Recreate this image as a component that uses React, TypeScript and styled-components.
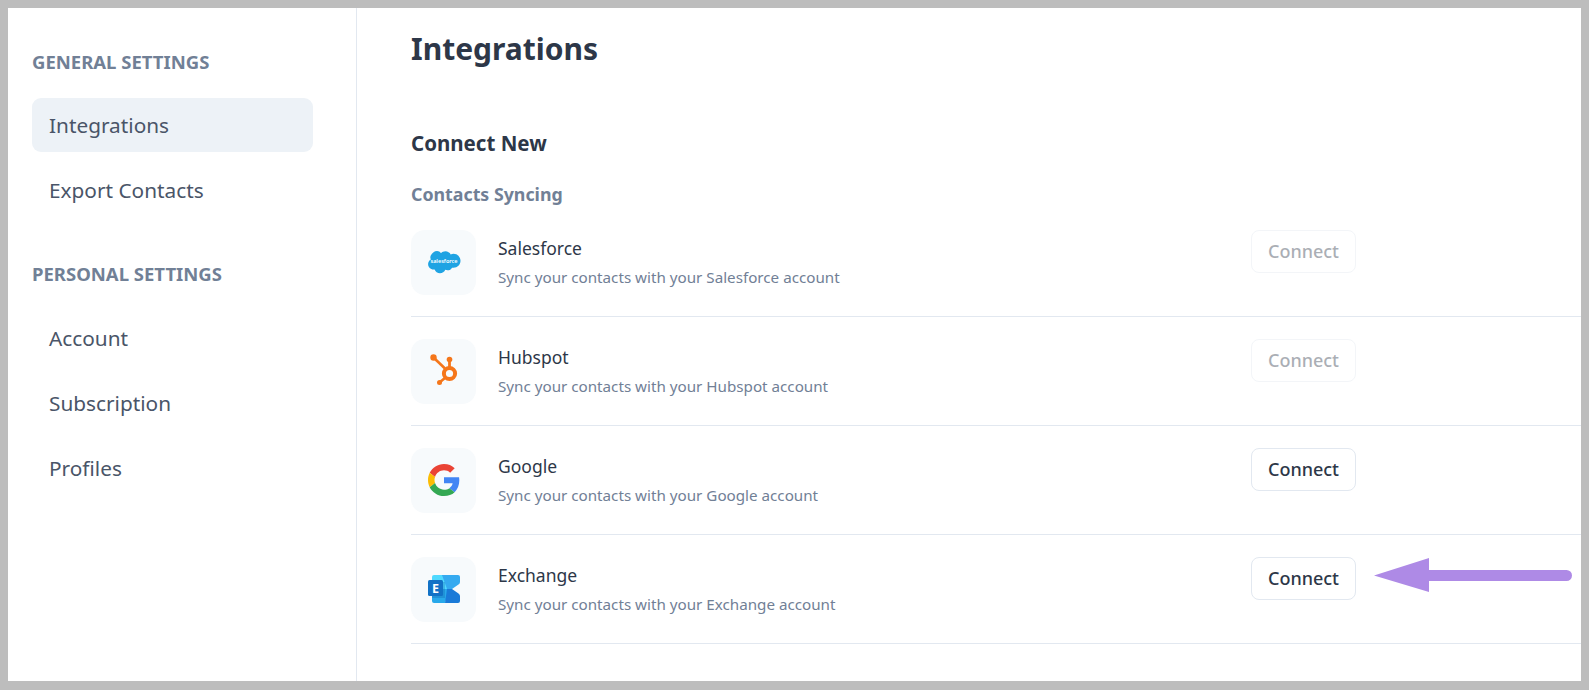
import styled, {createGlobalStyle} from "styled-components";
import type {ReactNode} from "react";

const GlobalStyle = createGlobalStyle`
    html, body {
        margin: 0;
        padding: 0;
        background: #bdbdbd;
    }

    body {
        font-family: "Noto Sans", "Open Sans", sans-serif;
    }

    * {
        box-sizing: border-box;
    }
`

const SalesforceIcon = () => <svg width="34" height="24" viewBox="0 0 34 24">
    <path fill="#1fa3e3"
          d="M14 3.2c1.1-1.200 2.700-1.900 4.400-1.900 2.300 0 4.300 1.300 5.300 3.100.9-.4 1.800-.6 2.800-.6 3.900 0 7 3.100 7 7s-3.100 7-7 7c-.5 0-.9 0-1.400-.1-.9 1.600-2.600 2.600-4.500 2.600-.8 0-1.600-.2-2.300-.5-.9 2.100-3 3.500-5.300 3.500-2.500 0-4.600-1.600-5.400-3.800-.4.1-.7.1-1.100.1-3 0-5.400-2.400-5.400-5.500 0-2 1.100-3.800 2.700-4.700-.3-.8-.5-1.600-.5-2.500C4.300 3.400 7 .9 10.100.9c1.500 0 2.900.9 3.900 2.300z"/>
    <SalesforceLabel x="17" y="12.500" textAnchor="middle">salesforce</SalesforceLabel>
</svg>

const HubspotIcon = () => <svg width="34" height="34" viewBox="0 0 34 34">
    <g stroke="#f5761a" fill="none">
        <circle cx="22.500" cy="19.500" r="5.600" strokeWidth="4"/>
        <path d="M6.500 3.500 L18 14.500" strokeWidth="2.600"/>
        <path d="M22.500 5.500 V13" strokeWidth="2.800"/>
        <path d="M12.500 28.500 L18.500 23.500" strokeWidth="2.600"/>
    </g>
    <circle cx="6.500" cy="3.500" r="3.200" fill="#f5761a"/>
    <circle cx="22.500" cy="5.500" r="2.800" fill="#f5761a"/>
    <circle cx="12.500" cy="28.500" r="2.500" fill="#f5761a"/>
</svg>

const GoogleIcon = () => <svg width="32" height="32" viewBox="0 0 48 48">
    <path fill="#EA4335"
          d="M24 9.500c3.540 0 6.710 1.220 9.210 3.600l6.850-6.850C35.900 2.380 30.470 0 24 0 14.620 0 6.510 5.380 2.560 13.220l7.980 6.190C12.430 13.720 17.740 9.500 24 9.500z"/>
    <path fill="#4285F4"
          d="M46.980 24.550c0-1.570-.15-3.090-.38-4.550H24v9.020h12.940c-.58 2.960-2.260 5.480-4.780 7.180l7.730 6c4.510-4.180 7.090-10.360 7.090-17.650z"/>
    <path fill="#FBBC05"
          d="M10.530 28.590c-.48-1.450-.76-2.990-.76-4.590s.27-3.140.76-4.590l-7.980-6.190C.92 16.460 0 20.120 0 24c0 3.880.92 7.540 2.560 10.780l7.970-6.190z"/>
    <path fill="#34A853"
          d="M24 48c6.480 0 11.930-2.130 15.890-5.810l-7.730-6c-2.150 1.450-4.920 2.300-8.160 2.300-6.260 0-11.570-4.220-13.470-9.910l-7.980 6.190C6.510 42.620 14.620 48 24 48z"/>
</svg>

const ExchangeIcon = () => <svg width="32" height="28" viewBox="0 0 32 28">
    <path fill="#50d9ff" d="M6 0 H17 L22 14 H4 V2 Q4 0 6 0 Z"/>
    <path fill="#28a8ea" d="M4 14 H22 L17 28 H6 Q4 28 4 26 Z"/>
    <path fill="#35aaf0" d="M14 0 H30 Q32 0 32 2 V7 Q32 8.500 30.500 9.500 L24 14 H19 Z"/>
    <path fill="#1a7ad8" d="M19 14 H24 L30.500 18.500 Q32 19.500 32 21 V26 Q32 28 30 28 H17 Z"/>
    <rect x="4" y="7" width="13" height="16" fill="#0f5fa8" opacity="0.3"/>
    <rect x="0" y="5" width="15" height="16" rx="1.500" fill="#1272c6"/>
    <ExchangeLetter x="7.500" y="17.500" textAnchor="middle">E</ExchangeLetter>
</svg>

type Integration = {
    name: string;
    icon: ReactNode;
    disabled?: boolean;
}

const integrations: Array<Integration> = [
    {name: "Salesforce", icon: <SalesforceIcon/>, disabled: true},
    {name: "Hubspot", icon: <HubspotIcon/>, disabled: true},
    {name: "Google", icon: <GoogleIcon/>},
    {name: "Exchange", icon: <ExchangeIcon/>},
]

export default function App() {
    return <Frame>
        <GlobalStyle/>
        <Sidebar>
            <SidebarHeading>General Settings</SidebarHeading>
            <NavItem active>Integrations</NavItem>
            <NavItem>Export Contacts</NavItem>
            <SidebarHeading second>Personal Settings</SidebarHeading>
            <NavItem>Account</NavItem>
            <NavItem>Subscription</NavItem>
            <NavItem>Profiles</NavItem>
        </Sidebar>
        <Main>
            <Title>Integrations</Title>
            <SectionTitle>Connect New</SectionTitle>
            <GroupTitle>Contacts Syncing</GroupTitle>
            {integrations.map((item) => {
                return <Row key={item.name}>
                    <IconTile>{item.icon}</IconTile>
                    <RowText>
                        <RowName>{item.name}</RowName>
                        <RowDescription>Sync your contacts with your {item.name} account</RowDescription>
                    </RowText>
                    <ConnectButton disabled={item.disabled}>Connect</ConnectButton>
                </Row>
            })}
        </Main>
        <Arrow width="200" height="36" viewBox="0 0 200 36">
            <path fill="#ae8ae6" d="M0 17.500 L55 0 V12 H192.500 A5.500 5.500 0 0 1 192.500 23 H55 V34 Z"/>
        </Arrow>
    </Frame>
}

const SalesforceLabel = styled.text`
    font-family: "Noto Sans", sans-serif;
    font-size: 5.500px;
    font-weight: 600;
    fill: #ffffff;
`

const ExchangeLetter = styled.text`
    font-family: "Noto Sans", sans-serif;
    font-size: 12.500px;
    font-weight: 700;
    fill: #ffffff;
`

const Frame = styled.div`
    position: relative;
    display: flex;
    width: 1573px;
    height: 673px;
    margin: 8px 0 9px 8px;
    background: #ffffff;
    overflow: hidden;
`

const Sidebar = styled.aside`
    flex: none;
    width: 349px;
    padding: 42px 43px 0 24px;
    border-right: 1px solid #e2e8f0;
`

const SidebarHeading = styled.h4<{ second?: boolean }>`
    margin: ${(props) => props.second ? "45px" : "0"} 0 ${(props) => props.second ? "25px" : "24px"};
    font-size: 18.500px;
    line-height: 24px;
    font-weight: 700;
    text-transform: uppercase;
    color: #718096;
`

const NavItem = styled.div<{ active?: boolean }>`
    display: flex;
    align-items: center;
    height: 54px;
    margin-bottom: 11px;
    padding: 0 17px;
    border-radius: 9px;
    font-size: 20.800px;
    color: #4a5568;
    background: ${(props) => props.active ? "#edf2f7" : "transparent"};
`

const Main = styled.main`
    flex: 1;
    padding: 21px 0 0 54px;
`

const Title = styled.h1`
    margin: 0;
    font-size: 30px;
    line-height: 40px;
    font-weight: 700;
    color: #2d3748;
`

const SectionTitle = styled.h2`
    margin: 60px 0 0;
    font-size: 20.500px;
    line-height: 28px;
    font-weight: 700;
    color: #2d3748;
`

const GroupTitle = styled.h3`
    margin: 25px 0 24px;
    font-size: 17.800px;
    line-height: 24px;
    font-weight: 700;
    color: #718096;
`

const Row = styled.div`
    display: flex;
    align-items: center;
    height: 87px;
    margin-bottom: 22px;
    padding: 0 225px 22px 0;
    border-bottom: 1px solid #e2e8f0;
`

const IconTile = styled.div`
    flex: none;
    display: flex;
    align-items: center;
    justify-content: center;
    width: 65px;
    height: 65px;
    border-radius: 14px;
    background: #f7fafc;
`

const RowText = styled.div`
    flex: 1;
    margin-left: 22px;
`

const RowName = styled.div`
    font-size: 17.500px;
    line-height: 24px;
    color: #2d3748;
`

const RowDescription = styled.div`
    margin-top: 6px;
    font-size: 15.200px;
    line-height: 22px;
    color: #718096;
`

const ConnectButton = styled.button`
    flex: none;
    align-self: flex-start;
    width: 105px;
    height: 43px;
    padding: 0 0 2px;
    border: 1px solid #e2e8f0;
    border-radius: 8px;
    background: #ffffff;
    font-family: inherit;
    font-size: 18px;
    font-weight: 500;
    color: #2d3748;

    &:disabled {
        opacity: 0.4;
    }
`

const Arrow = styled.svg`
    position: absolute;
    left: 1366px;
    top: 550px;
`
